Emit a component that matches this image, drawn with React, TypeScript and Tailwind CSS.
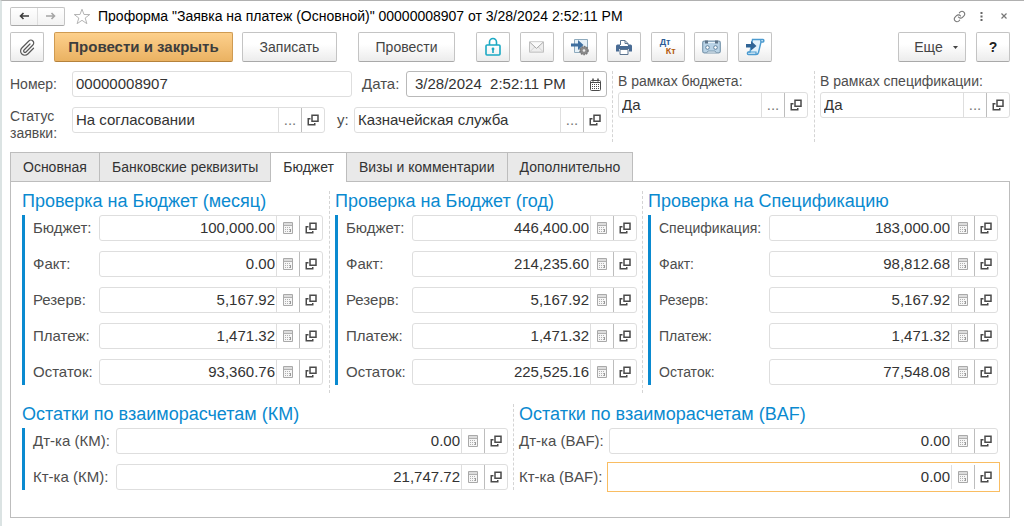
import React, { useId, useState } from "react";
import clsx from "clsx";

const tabs = [
  "Основная",
  "Банковские реквизиты",
  "Бюджет",
  "Визы и комментарии",
  "Дополнительно",
];

const monthRows = [
  { label: "Бюджет:", value: "100,000.00" },
  { label: "Факт:", value: "0.00" },
  { label: "Резерв:", value: "5,167.92" },
  { label: "Платеж:", value: "1,471.32" },
  { label: "Остаток:", value: "93,360.76" },
];

const yearRows = [
  { label: "Бюджет:", value: "446,400.00" },
  { label: "Факт:", value: "214,235.60" },
  { label: "Резерв:", value: "5,167.92" },
  { label: "Платеж:", value: "1,471.32" },
  { label: "Остаток:", value: "225,525.16" },
];

const specRows = [
  { label: "Спецификация:", value: "183,000.00" },
  { label: "Факт:", value: "98,812.68" },
  { label: "Резерв:", value: "5,167.92" },
  { label: "Платеж:", value: "1,471.32" },
  { label: "Остаток:", value: "77,548.08" },
];

const kmRows = [
  { label: "Дт-ка (КМ):", value: "0.00" },
  { label: "Кт-ка (КМ):", value: "21,747.72" },
];

const bafRows = [
  { label: "Дт-ка (BAF):", value: "0.00" },
  { label: "Кт-ка (BAF):", value: "0.00", focused: true },
];

const OpenIcon = () => (
  <svg width="12" height="12" viewBox="0 0 12 12" fill="none" stroke="#4a4a4a" strokeWidth="1.5">
    <path d="M5 1.25h6v6H5z" />
    <path d="M3.5 4.75H1.25v6h6.5V9" />
  </svg>
);

const CalcIcon = () => (
  <svg width="10" height="12" viewBox="0 0 10 12" fill="none" stroke="#b0b0b0">
    <path d="M.5.5h9v11h-9z" fill="#f6f6f6" stroke="#a9a9a9" />
    <path d="M1 2h8" stroke="#dcdcdc" strokeWidth="2" />
    <path d="M1 3.5h8" />
    <path d="M2 5.5h6M2 7.5h6M2 9.5h6" strokeDasharray="1 1" />
    <path d="M7.5 7v3" stroke="#999" />
  </svg>
);

const CalendarIcon = () => (
  <svg width="11" height="13" viewBox="0 0 11 13" fill="none" stroke="#4a4a4a">
    <path d="M1.5 2.5h8a1 1 0 0 1 1 1v8a1 1 0 0 1-1 1h-8a1 1 0 0 1-1-1v-8a1 1 0 0 1 1-1z" />
    <path d="M1 4.500h9" />
    <path d="M3 .5v3M8 .5v3" strokeWidth="1.5" />
    <path d="M2 6.5h7M2 8.5h7M2 10.5h7" strokeDasharray="1 1" />
  </svg>
);

const LockIcon = () => (
  <svg width="18" height="20" viewBox="0 0 18 20" fill="none" stroke="#1ba9c4" strokeWidth="1.6">
    <rect x="2" y="8" width="14" height="10" rx="1" />
    <path d="M5.5 8V5a3.5 3.5 0 0 1 7 0v3" />
    <path d="M9 13v3" />
    <circle cx="9" cy="12" r="1.4" fill="#1ba9c4" stroke="none" />
  </svg>
);

const MailIcon = () => (
  <svg width="15" height="12" viewBox="0 0 16 12" fill="#eeeeee" stroke="#b9b9b9">
    <path d="M.5.5h15v11H.5z" />
    <path d="M1 11l5-5M15 11l-5-5" fill="none" stroke="#cfcfcf" />
    <path d="m1 1 7 6.5L15 1" fill="#fafafa" stroke="#a5a5a5" />
  </svg>
);

const LoadSettingsIcon = () => (
  <svg width="20" height="18" viewBox="0 0 20 18">
    <path d="M4.5 1.5h13v13h-13z" fill="#e6f1f8" stroke="#8eaabd" />
    <circle cx="14" cy="12.500" r="4" fill="#8b8b8b" stroke="#777" strokeWidth="1.6" strokeDasharray="1.6 1" />
    <circle cx="14" cy="12.500" r="1.300" fill="#ececec" />
    <path d="M1 5.5h7V2l5.5 5L8 12V8.500H1z" fill="#3f6f9f" />
  </svg>
);

const PrinterIcon = () => (
  <svg width="18" height="17" viewBox="0 0 18 17">
    <path d="M5.500 6V1.500h4.500l3 3V6" fill="#fff" stroke="#5c7590" />
    <path d="M10 1.500v3h3" fill="none" stroke="#5c7590" />
    <path d="M2.500 5.500H5v1.500h8V5.500h2.500A1.500 1.500 0 0 1 17 7v5.500h-3V10H4v2.500H1V7a1.500 1.500 0 0 1 1.500-1.500z" fill="#486b94" />
    <path d="M5 10.500h8v5H5z" fill="#fff" stroke="#5c7590" />
  </svg>
);

const CassetteIcon = () => (
  <svg width="19" height="14" viewBox="0 0 19 14">
    <rect x=".7" y="1.200" width="17.600" height="11.600" rx="1.500" fill="#b9d3e6" stroke="#7b98ae" strokeWidth="1.200" />
    <path d="M3 .5h3v3H3zM13 .5h3v3h-3z" fill="#5e7488" />
    <path d="M6 2.500h7" stroke="#e9f3fa" />
    <circle cx="5.500" cy="7.500" r="1.800" fill="#fff" stroke="#5e819d" />
    <circle cx="13.500" cy="7.500" r="1.800" fill="#fff" stroke="#5e819d" />
    <path d="M5 12.500l1-1.500h7l1 1.500" fill="#e9f3fa" stroke="#7b98ae" />
  </svg>
);

const ScrollIcon = () => (
  <svg width="20" height="18" viewBox="0 0 20 18">
    <path d="M7.500 1.500h10.500c1.200 0 1.200 2.500 0 2.500h-2l-2.500 10.500c-.4 1.500-1.200 2-2.500 2H3.500c-1.500 0-1.500-2.500 0-2.500H5z" fill="#e3f2fb" stroke="#4c9bd0" strokeWidth="1.400" />
    <path d="M15.500 1.500 16 4M3.500 14h7.500v2.500" fill="none" stroke="#4c9bd0" strokeWidth="1.200" />
    <path d="M1 6h5V3l5.500 5L6 12.500V9.500H1z" fill="#2f6496" />
  </svg>
);

const PaperclipIcon = () => (
  <svg width="17" height="17" viewBox="0 0 24 24" fill="none" stroke="#5a5a5a" strokeWidth="1.700" strokeLinecap="round">
    <path d="m15.500 7-8.400 8.500a1.900 1.900 0 0 0 2.800 2.800l9.700-9.800a4 4 0 0 0-5.700-5.700L4 12.700a6 6 0 0 0 8.500 8.500l8-8.200" />
  </svg>
);

const DtKtIcon = () => (
  <span className="flex w-4 flex-col text-[9px] leading-[9px] font-bold">
    <span className="self-start text-[#2d5c96]">Дт</span>
    <span className="self-end text-[#b3590f]">Кт</span>
  </span>
);

const toolIcons = [
  { name: "Блокировка", icon: <LockIcon /> },
  { name: "Письмо", icon: <MailIcon /> },
  { name: "Загрузить", icon: <LoadSettingsIcon /> },
  { name: "Печать", icon: <PrinterIcon /> },
  { name: "Проводки", icon: <DtKtIcon /> },
  { name: "Запись", icon: <CassetteIcon /> },
  { name: "Документы", icon: <ScrollIcon /> },
];

type ToolButtonProps = {
  children: React.ReactNode;
  label?: string;
  className?: string;
};

const ToolButton = ({ children, label, className }: ToolButtonProps) => (
  <button
    type="button"
    aria-label={label}
    className={clsx(
      "flex h-[30px] shrink-0 items-center justify-center rounded-xs border border-[#c4c4c4] border-b-[#a9a9a9] bg-linear-to-b from-white from-40% to-[#ececec]",
      className,
    )}
  >
    {children}
  </button>
);

type FieldProps = {
  id: string;
  value: string;
  kind?: "plain" | "pick" | "calc" | "date";
  focused?: boolean;
  className?: string;
};

const Field = ({ id, value, kind = "plain", focused, className }: FieldProps) => (
  <div
    className={clsx(
      "flex h-[26px] min-w-0 border bg-white text-[15px]",
      focused ? "border-white outline-1 outline-offset-1 outline-[#f9bd62]" : "rounded-[3px]",
      !focused && kind === "date" && "border-[#b9b9b9]",
      !focused && kind !== "date" && "border-[#dedede]",
      className,
    )}
  >
    <input
      id={id}
      defaultValue={value}
      className={clsx(
        "w-0 min-w-0 flex-1 bg-transparent text-[#333] outline-none",
        kind === "calc" && "pr-px text-right",
        kind === "date" && "pl-2 whitespace-pre",
        (kind === "plain" || kind === "pick") && "pl-[3px]",
      )}
    />
    {kind === "pick" && (
      <button type="button" aria-label="Выбрать" className="w-[23px] border-l border-[#dedede] text-[#777]">
        ...
      </button>
    )}
    {kind === "calc" && (
      <button type="button" aria-label="Калькулятор" className="flex w-[23px] items-center justify-center border-l border-[#dedede]">
        <CalcIcon />
      </button>
    )}
    {kind === "date" && (
      <button type="button" aria-label="Календарь" className="flex w-[23px] items-center justify-center border-l border-[#b9b9b9]">
        <CalendarIcon />
      </button>
    )}
    {(kind === "pick" || kind === "calc") && (
      <button type="button" aria-label="Открыть" className="flex w-[23px] items-center justify-center border-l border-[#bdbdbd]">
        <OpenIcon />
      </button>
    )}
  </div>
);

type Row = { label: string; value: string; focused?: boolean };

type SectionProps = {
  title: string;
  rows: Row[];
  labelClass: string;
  bar?: boolean;
  className?: string;
};

const Section = ({ title, rows, labelClass, bar = true, className }: SectionProps) => {
  const id = useId();
  return (
    <section className={className}>
      <h2 className="h-6 text-lg leading-5 whitespace-nowrap text-[#0a8ad0]">{title}</h2>
      <div className={clsx("flex flex-col gap-[10px]", bar && "border-l-3 border-[#0a8ad0] pl-2")}>
        {rows.map((row, i) => (
          <div key={row.label} className="flex items-center">
            <label htmlFor={`${id}-${i}`} className={clsx("shrink-0 whitespace-nowrap", labelClass)}>
              {row.label}
            </label>
            <Field id={`${id}-${i}`} value={row.value} kind="calc" focused={row.focused} className="flex-1" />
          </div>
        ))}
      </div>
    </section>
  );
};

const TitleBar = () => (
  <header className="flex h-5 items-center">
    <div className="flex h-[19px] w-[55px] rounded-xs border border-[#c4c4c4] border-b-[#a9a9a9] bg-linear-to-b from-white to-[#f2f2f2]">
      <button type="button" aria-label="Назад" className="flex flex-1 items-center justify-center">
        <svg width="10" height="8" viewBox="0 0 10 8" fill="none" stroke="#3c3c3c" strokeWidth="1.600">
          <path d="M10 4H1.500M4.500 1l-3 3 3 3" />
        </svg>
      </button>
      <button type="button" aria-label="Вперед" className="flex flex-1 items-center justify-center border-l border-[#dedede]">
        <svg width="10" height="8" viewBox="0 0 10 8" fill="none" stroke="#a5a5a5" strokeWidth="1.600">
          <path d="M0 4h8.500M5.500 1l3 3-3 3" />
        </svg>
      </button>
    </div>
    <button type="button" aria-label="В избранное" className="ml-2">
      <svg width="18" height="17" viewBox="0 0 18 17" fill="#fff" stroke="#b5b5b5">
        <path d="m9 1.200 2 5.300h5.800l-4.600 3.500 1.700 5.700L9 12.300l-4.900 3.400L5.800 10 1.200 6.500H7z" />
      </svg>
    </button>
    <h1 className="ml-[7px] flex-1 text-sm whitespace-nowrap text-black">
      Проформа "Заявка на платеж (Основной)" 00000008907 от 3/28/2024 2:52:11 PM
    </h1>
    <button type="button" aria-label="Ссылка">
      <svg width="13" height="13" viewBox="0 0 24 24" fill="none" stroke="#777" strokeWidth="2" strokeLinecap="round">
        <path d="M10 13a5 5 0 0 0 7.500.5l3-3a5 5 0 0 0-7-7l-1.800 1.700" />
        <path d="M14 11a5 5 0 0 0-7.500-.5l-3 3a5 5 0 0 0 7 7l1.700-1.700" />
      </svg>
    </button>
    <button type="button" aria-label="Меню" className="ml-[14px]">
      <svg width="3" height="9" viewBox="0 0 3 9" fill="#666">
        <path d="M.5 0h2v2h-2zM.5 3.500h2v2h-2zM.5 7h2v2h-2z" />
      </svg>
    </button>
    <button type="button" aria-label="Закрыть" className="mr-[3px] ml-[18px]">
      <svg width="6" height="6" viewBox="0 0 6 6" stroke="#777" strokeWidth="1.200">
        <path d="m.5.5 5 5M5.500.5l-5 5" />
      </svg>
    </button>
  </header>
);

const Toolbar = () => (
  <div className="mt-[6px] flex items-center text-sm text-[#444]">
    <ToolButton label="Вложения" className="w-[34px]">
      <PaperclipIcon />
    </ToolButton>
    <button
      type="button"
      className="ml-[10px] h-[30px] w-[179px] rounded-xs border border-[#cf9b52] border-b-[#b5823c] bg-linear-to-b from-[#fdd08c] to-[#eab262] text-[15px] font-bold whitespace-nowrap text-[#3d3d3d]"
    >
      Провести и закрыть
    </button>
    <ToolButton className="ml-[9px] w-[95px]">Записать</ToolButton>
    <ToolButton className="ml-[21px] w-[97px]">Провести</ToolButton>
    <div className="ml-[21px] flex w-[296px] justify-between">
      {toolIcons.map((tool) => (
        <ToolButton key={tool.name} label={tool.name} className="w-[34px]">
          {tool.icon}
        </ToolButton>
      ))}
    </div>
    <ToolButton className="ml-auto w-[68px] gap-[10px] pl-2">
      Еще
      <svg width="5" height="3" viewBox="0 0 5 3" fill="#444">
        <path d="M0 0h5L2.500 3z" />
      </svg>
    </ToolButton>
    <ToolButton className="ml-[10px] w-[34px] font-bold text-[#222]">?</ToolButton>
  </div>
);

const RequestForm = () => (
  <div className="mt-[9px] flex h-[71px]">
    <div className="flex min-w-0 flex-1 flex-col gap-[10px] pr-[5px]">
      <div className="flex items-center">
        <label htmlFor="number" className="w-[62px] shrink-0 text-sm">Номер:</label>
        <Field id="number" value="00000008907" className="flex-1" />
        <label htmlFor="date" className="ml-[10px] w-[44px] shrink-0">Дата:</label>
        <Field id="date" value="3/28/2024  2:52:11 PM" kind="date" className="w-[201px]" />
      </div>
      <div className="flex items-start">
        <label htmlFor="status" className="w-[62px] shrink-0 pt-px text-sm leading-[17px]">Статус заявки:</label>
        <Field id="status" value="На согласовании" kind="pick" className="flex-1" />
        <label htmlFor="holder" className="ml-3 w-[17px] shrink-0 leading-[26px]">у:</label>
        <Field id="holder" value="Казначейская служба" kind="pick" className="flex-1" />
      </div>
    </div>
    <div className="w-[202px] border-l border-dashed border-[#d4d4d4] pr-[6px] pl-[5px]">
      <label htmlFor="in-budget" className="block h-[21px] text-sm whitespace-nowrap">В рамках бюджета:</label>
      <Field id="in-budget" value="Да" kind="pick" />
    </div>
    <div className="w-[196px] border-l border-dashed border-[#d4d4d4] pl-[5px]">
      <label htmlFor="in-spec" className="block h-[21px] text-sm whitespace-nowrap">В рамках спецификации:</label>
      <Field id="in-spec" value="Да" kind="pick" />
    </div>
  </div>
);

const App = () => {
  const [active, setActive] = useState("Бюджет");

  return (
    <div className="min-h-screen border-t border-l-2 border-t-[#b0b0b0] border-l-[#dbe3e3] bg-white pt-[5px] pr-[14px] pb-2 pl-2 font-['Liberation_Sans',Arial,sans-serif] text-[15px] leading-5 text-[#4d4d4d]">
      <TitleBar />
      <Toolbar />
      <RequestForm />
      <div role="tablist" className="mt-[10px] flex text-sm">
        {tabs.map((tab, i) => (
          <button
            key={tab}
            type="button"
            role="tab"
            aria-selected={tab === active}
            onClick={() => setActive(tab)}
            className={clsx(
              "h-[29px] border-t border-r border-[#bdbdbd] px-3 whitespace-nowrap text-[#333]",
              i === 0 && "border-l",
              tab === active ? "-mb-px h-[30px] bg-white pb-px" : "bg-[#e9e9e9]",
            )}
          >
            {tab}
          </button>
        ))}
      </div>
      <main className="border border-[#bdbdbd] px-[11px] pt-[9px] pb-[27px]">
        <div className="grid grid-cols-[307fr_313fr_356fr]">
          <Section title="Проверка на Бюджет (месяц)" rows={monthRows} labelClass="w-[66px]" className="pr-[6px] pb-2" />
          <Section
            title="Проверка на Бюджет (год)"
            rows={yearRows}
            labelClass="w-[66px]"
            className="border-l border-dashed border-[#d4d4d4] pr-[5px] pb-2 pl-[5px]"
          />
          <Section
            title="Проверка на Спецификацию"
            rows={specRows}
            labelClass="w-[110px] text-sm"
            className="border-l border-dashed border-[#d4d4d4] pb-2 pl-[5px]"
          />
        </div>
        <div className="mt-[11px] grid grid-cols-[491fr_485fr]">
          <Section title="Остатки по взаиморасчетам (КМ)" rows={kmRows} labelClass="w-[83px]" className="pr-[5px]" />
          <Section
            title="Остатки по взаиморасчетам (BAF)"
            rows={bafRows}
            labelClass="w-[90px]"
            bar={false}
            className="border-l border-dashed border-[#d4d4d4] pl-[5px]"
          />
        </div>
      </main>
    </div>
  );
};

export default App;
